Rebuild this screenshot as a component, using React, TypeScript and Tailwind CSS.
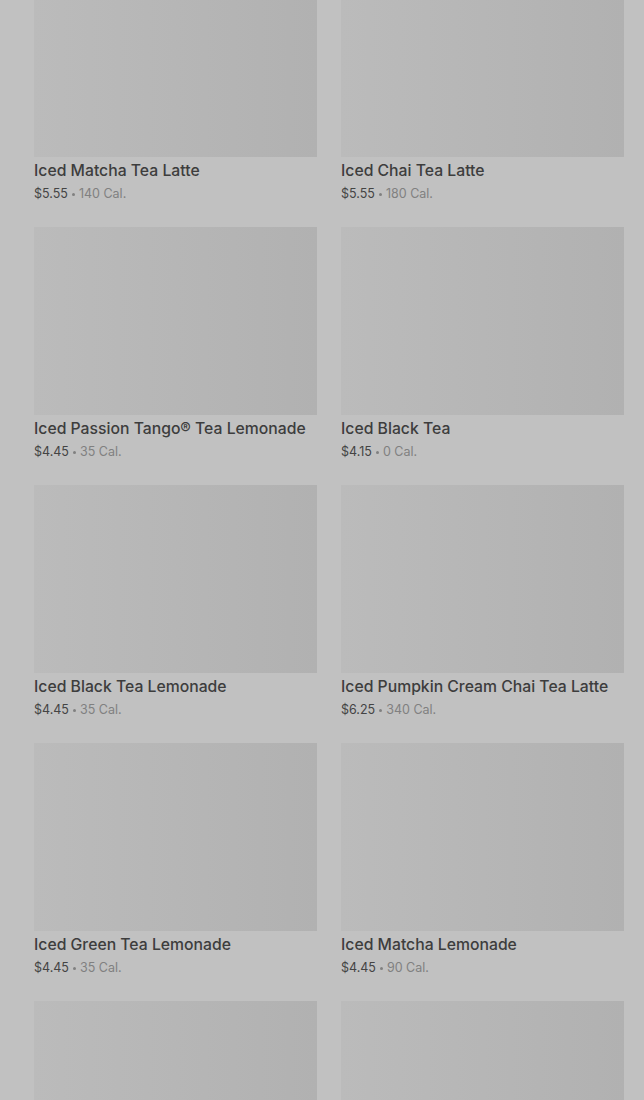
const items = [
  { name: "Iced Matcha Tea Latte", price: "$5.55", cal: "140 Cal." },
  { name: "Iced Chai Tea Latte", price: "$5.55", cal: "180 Cal." },
  { name: "Iced Passion Tango® Tea Lemonade", price: "$4.45", cal: "35 Cal." },
  { name: "Iced Black Tea", price: "$4.15", cal: "0 Cal." },
  { name: "Iced Black Tea Lemonade", price: "$4.45", cal: "35 Cal." },
  { name: "Iced Pumpkin Cream Chai Tea Latte", price: "$6.25", cal: "340 Cal." },
  { name: "Iced Green Tea Lemonade", price: "$4.45", cal: "35 Cal." },
  { name: "Iced Matcha Lemonade", price: "$4.45", cal: "90 Cal." },
];

function Card({ name, price, cal }: { name: string; price: string; cal: string }) {
  return (
    <div className="flex flex-col">
      <div className="h-[188px] w-full bg-gradient-to-r from-[#bbbbbb] to-[#b1b1b1]" />
      <div className="mt-[4px] text-[15.75px] leading-[20px] font-medium text-[#3d3d3d] whitespace-nowrap">
        {name}
      </div>
      <div className="mt-[4px] flex items-center gap-[4px] text-[12.5px] leading-[18px] text-[#444444]">
        <span>{price}</span>
        <span className="w-[3px] h-[3px] rounded-full bg-[#808080]" />
        <span className="text-[#808080]">{cal}</span>
      </div>
    </div>
  );
}

export default function App() {
  return (
    <main
      className="min-h-screen h-[1100px] overflow-hidden bg-[#c1c1c1]"
      style={{ fontFamily: "Inter, 'Noto Sans', sans-serif" }}
    >
      <div className="-mt-[31px] pl-[34px] pr-[20px] grid grid-cols-2 gap-x-[24px] gap-y-[24px]">
        {items.map((it) => (
          <Card key={it.name} {...it} />
        ))}
        {/* next row, cut off by the bottom of the view */}
        <div className="h-[188px] bg-gradient-to-r from-[#bbbbbb] to-[#b1b1b1]" />
        <div className="h-[188px] bg-gradient-to-r from-[#bbbbbb] to-[#b1b1b1]" />
      </div>
    </main>
  );
}
